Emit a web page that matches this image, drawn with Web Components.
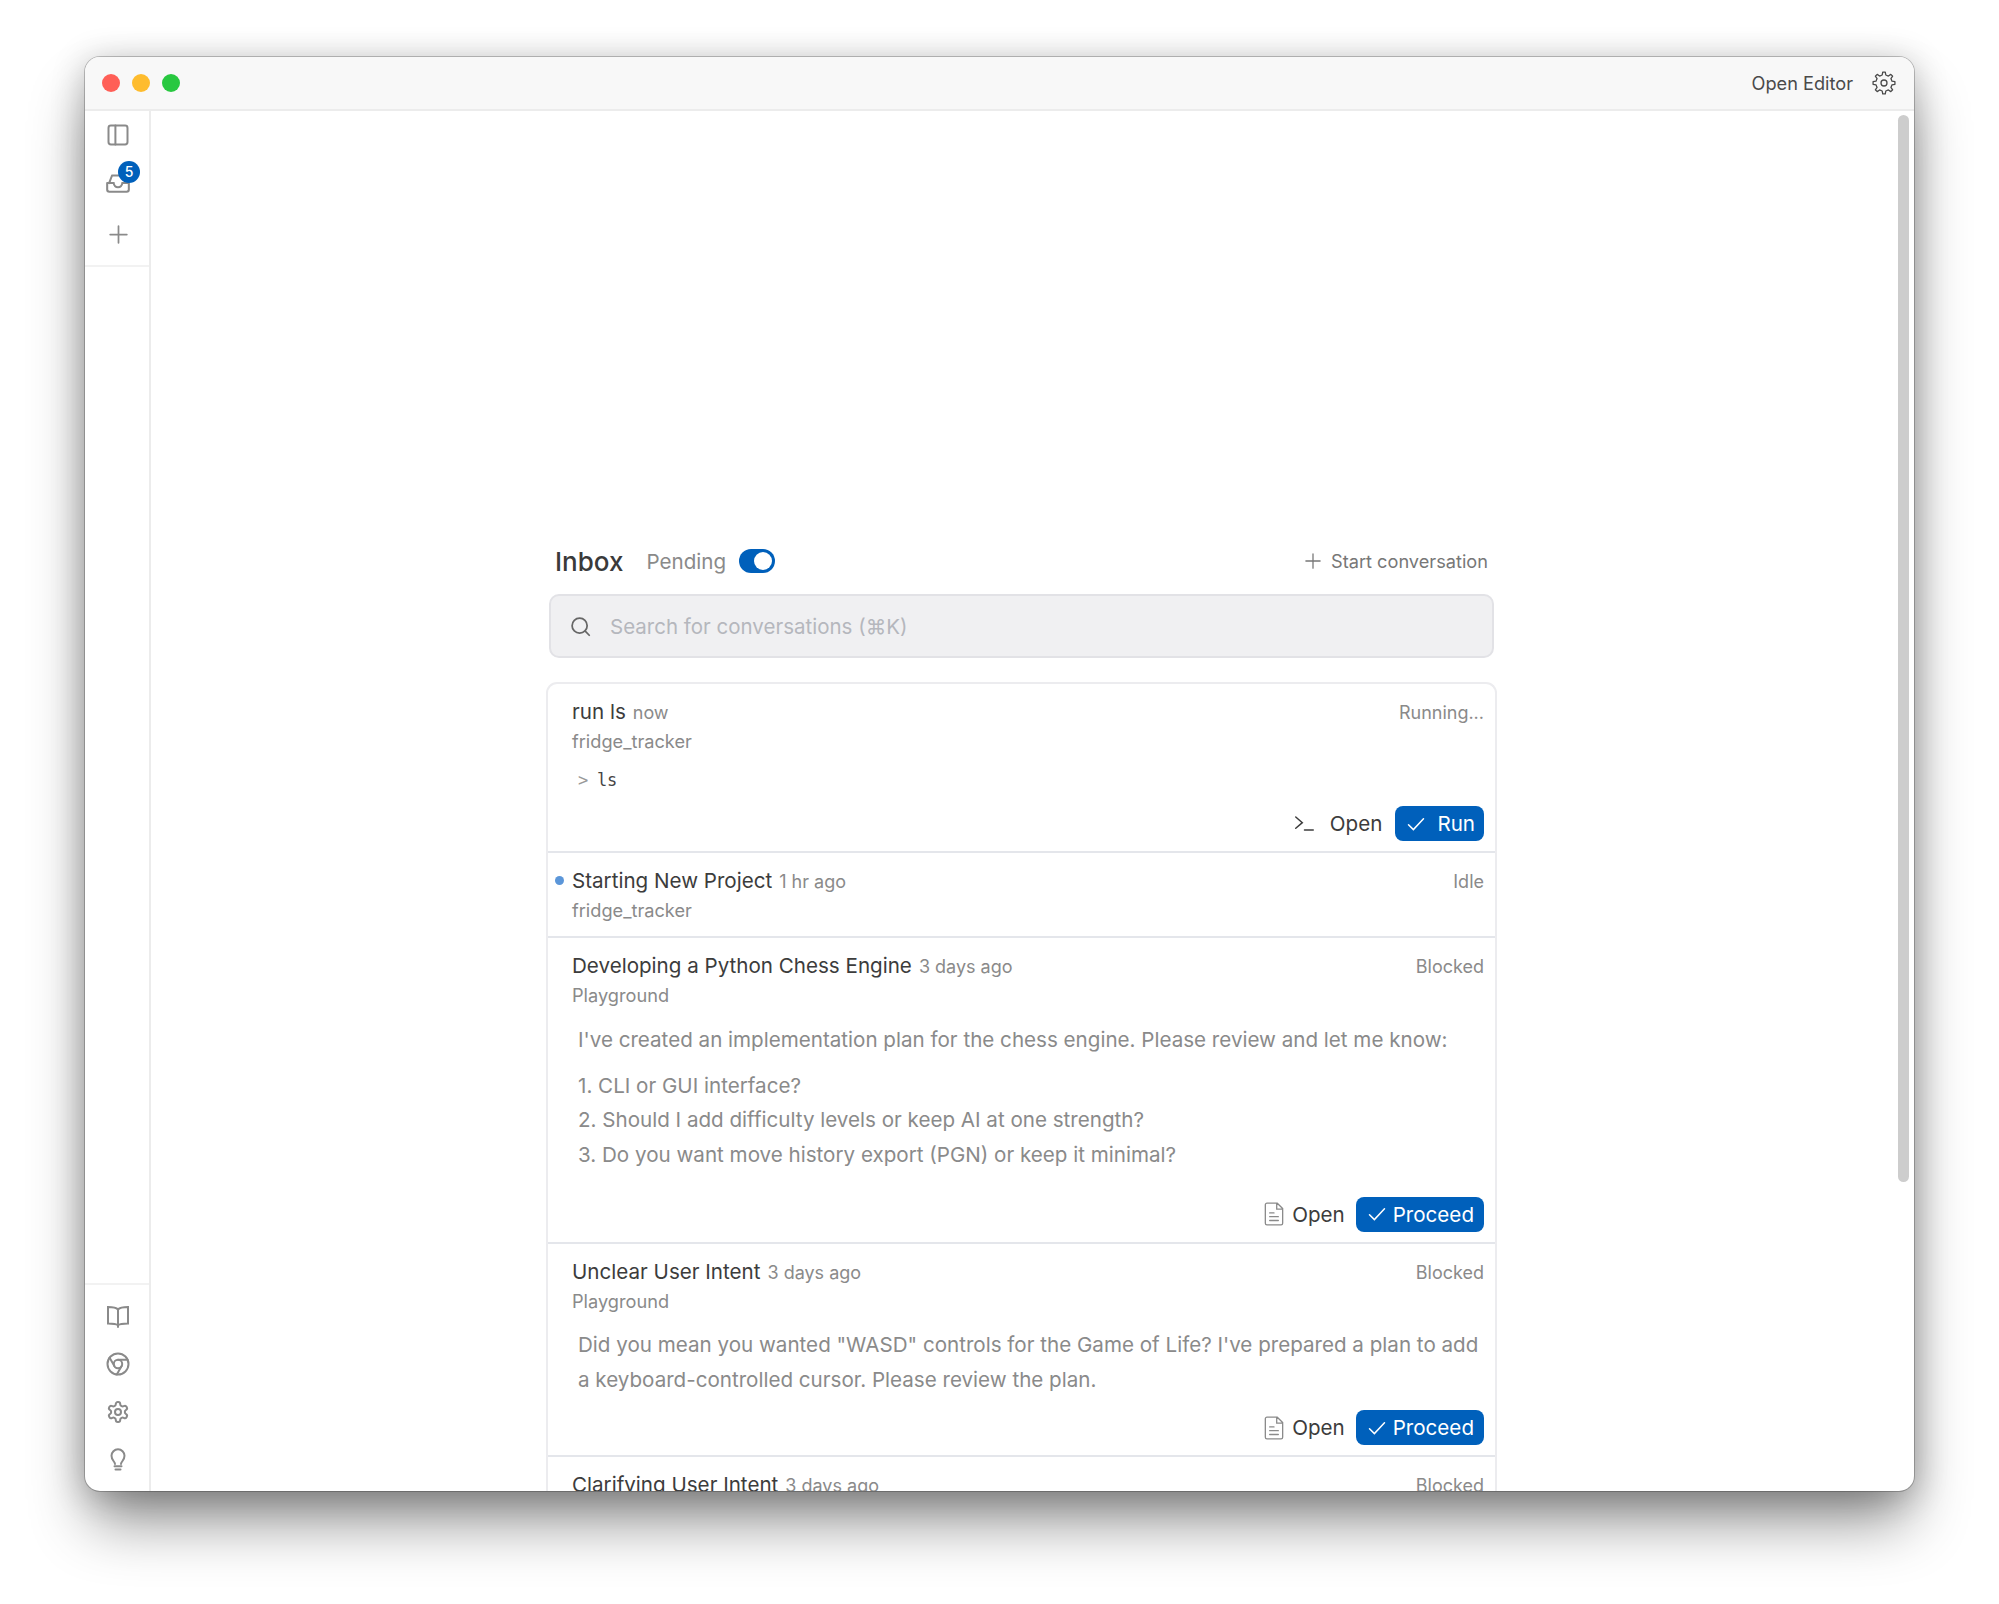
<!DOCTYPE html>
<html lang="en">
<head>
<meta charset="utf-8">
<title>Inbox</title>
<style>
  html, body { margin: 0; background: #fff; }
  body {
    box-sizing: border-box;
    height: 1604px;
    padding: 57px 85px 113px;
    display: flex;
    font-family: Inter, "Liberation Sans", sans-serif;
  }
</style>
</head>
<body>
<app-window>
  <title-bar slot="top"></title-bar>
  <side-bar slot="side"></side-bar>
  <inbox-header></inbox-header>
  <search-box placeholder="Search for conversations (⌘K)"></search-box>
  <conv-list>
    <conv-row heading="run ls" time="now" sub="fridge_tracker" status="Running...">
      <code-line>ls</code-line>
      <row-actions slot="actions" class="near">
        <act-button icon="terminal" label="Open"></act-button>
        <act-button primary icon="check" label="Run" wide></act-button>
      </row-actions>
    </conv-row>
    <conv-row heading="Starting New Project" time="1 hr ago" sub="fridge_tracker" status="Idle" unread></conv-row>
    <conv-row heading="Developing a Python Chess Engine" time="3 days ago" sub="Playground" status="Blocked">
      <row-text>I've created an implementation plan for the chess engine. Please review and let me know:</row-text>
      <row-text list>
        <div>1. CLI or GUI interface?</div>
        <div>2. Should I add difficulty levels or keep AI at one strength?</div>
        <div>3. Do you want move history export (PGN) or keep it minimal?</div>
      </row-text>
      <row-actions slot="actions" class="far">
        <act-button icon="doc" label="Open"></act-button>
        <act-button primary icon="check" label="Proceed"></act-button>
      </row-actions>
    </conv-row>
    <conv-row heading="Unclear User Intent" time="3 days ago" sub="Playground" status="Blocked">
      <row-text>Did you mean you wanted "WASD" controls for the Game of Life? I've prepared a plan to add a keyboard-controlled cursor. Please review the plan.</row-text>
      <row-actions slot="actions">
        <act-button icon="doc" label="Open"></act-button>
        <act-button primary icon="check" label="Proceed"></act-button>
      </row-actions>
    </conv-row>
    <conv-row heading="Clarifying User Intent" time="3 days ago" sub="Playground" status="Blocked"></conv-row>
  </conv-list>
</app-window>

<script>
// gear outline with n teeth, in a 24 box
function gearPath(n, ro, ri) {
  let d = '';
  const step = Math.PI * 2 / n;
  for (let i = 0; i < n; i++) {
    const a = i * step - Math.PI / 2;
    const pts = [
      [ri, a - step * 0.28], [ro, a - step * 0.15], [ro, a + step * 0.15], [ri, a + step * 0.28]
    ];
    pts.forEach((p, j) => {
      const x = (12 + p[0] * Math.cos(p[1])).toFixed(2);
      const y = (12 + p[0] * Math.sin(p[1])).toFixed(2);
      d += (i === 0 && j === 0 ? 'M' : 'L') + x + ' ' + y;
    });
  }
  return d + 'Z';
}

const ICONS = {
  panel: '<rect x="2.500" y="2.500" width="19" height="19" rx="2.400"/><path d="M9.400 2.500v19"/>',
  inbox: '<path d="M6.500 6 H14 M3.800 13 L6.500 6 M2 13 v6 a2 2 0 0 0 2 2 h16 a2 2 0 0 0 2 -2 v-6 M2 13 H8 c.5 2.800 2 3.800 4 3.800 s3.500 -1 4 -3.800 h6"/>',
  plus: '<path d="M12 2.500v19M2.500 12h19"/>',
  book: '<path d="M12 5.500 C10.500 3.800 8 3 2 3 v16.500 c6 0 8.500 .5 10 1.800 c1.500 -1.300 4 -1.800 10 -1.800 V3 c-6 0 -8.500 .8 -10 2.500z M12 5.500 V23"/>',
  chrome: '<circle cx="12" cy="12" r="10.500"/><circle cx="12" cy="12" r="4.200"/><path d="M12 7.800h9.600M8.400 14.100 3.600 5.800M15.600 14.100 10.800 22.400"/>',
  cog: '<path d="M12.220 2h-.44a2 2 0 0 0-2 2v.18a2 2 0 0 1-1 1.730l-.43.25a2 2 0 0 1-2 0l-.15-.08a2 2 0 0 0-2.730.73l-.22.38a2 2 0 0 0 .73 2.730l.15.1a2 2 0 0 1 1 1.720v.51a2 2 0 0 1-1 1.740l-.15.09a2 2 0 0 0-.73 2.730l.22.38a2 2 0 0 0 2.730.73l.15-.08a2 2 0 0 1 2 0l.43.25a2 2 0 0 1 1 1.730V20a2 2 0 0 0 2 2h.44a2 2 0 0 0 2-2v-.18a2 2 0 0 1 1-1.730l.43-.25a2 2 0 0 1 2 0l.15.08a2 2 0 0 0 2.730-.73l.22-.39a2 2 0 0 0-.73-2.730l-.15-.08a2 2 0 0 1-1-1.740v-.5a2 2 0 0 1 1-1.740l.15-.09a2 2 0 0 0 .73-2.730l-.22-.38a2 2 0 0 0-2.730-.73l-.15.08a2 2 0 0 1-2 0l-.43-.25a2 2 0 0 1-1-1.730V4a2 2 0 0 0-2-2z"/><circle cx="12" cy="12" r="3"/>',
  gear8: '<path stroke-linejoin="round" d="' + gearPath(8, 11, 8.200) + '"/><circle cx="12" cy="12" r="3"/>',
  bulb: '<path d="M9 16 C9 13.500 5.500 12.500 5.500 7.800 a6.500 6.500 0 0 1 13 0 C18.500 12.500 15 13.500 15 16 M8.500 18.300h7M9.500 21.500h5"/>',
  search: '<circle cx="11" cy="11" r="8.600"/><path d="m17.400 17.400 4.600 4.600"/>',
  terminal: '<path d="M2 4.500 9.500 11 2 17.500M12 19.500h10"/>',
  doc: '<path d="M5.500 2h9.500l5 5v13.500a1.500 1.500 0 0 1-1.500 1.500h-13A1.500 1.500 0 0 1 4 20.500v-17A1.500 1.500 0 0 1 5.500 2zM14.500 2v5.500H20M8 11h4M8 14.500h8M8 18h8"/>',
  check: '<path d="M2 13 8.500 19.500 22 5"/>'
};

class UiIcon extends HTMLElement {
  connectedCallback() {
    const size = this.getAttribute('size') || 24;
    const width = this.getAttribute('stroke') || 1.600;
    this.attachShadow({mode: 'open'}).innerHTML = `
      <style>
        :host { display: inline-flex; flex: none; line-height: 0; }
        svg { fill: none; stroke: currentColor; stroke-linecap: round; }
      </style>
      <svg width="${size}" height="${size}" viewBox="0 0 24 24" stroke-width="${width}">${ICONS[this.getAttribute('name')]}</svg>`;
  }
}
customElements.define('ui-icon', UiIcon);

class AppWindow extends HTMLElement {
  constructor() {
    super();
    this.attachShadow({mode: 'open'}).innerHTML = `
      <style>
        :host {
          display: flex; flex-direction: column; flex: 1; min-width: 0;
          position: relative; overflow: hidden;
          background: #fff; border-radius: 15px;
          box-shadow: 0 0 0 1px rgba(0,0,0,.22), 0 36px 60px -6px rgba(0,0,0,.44), 0 4px 34px rgba(0,0,0,.24);
        }
        .body { flex: 1; display: flex; min-height: 0; }
        main {
          flex: 1; min-width: 0; overflow: hidden;
          display: flex; flex-direction: column; align-items: center;
          padding: 430px 22px 0 0;
        }
        .col { width: 951px; }
        .thumb {
          position: absolute; left: 1813px; top: 58px;
          width: 11px; height: 1067px; border-radius: 6px; background: #cdcdcd;
        }
      </style>
      <slot name="top"></slot>
      <div class="body">
        <slot name="side"></slot>
        <main><div class="col"><slot></slot></div></main>
      </div>
      <div class="thumb"></div>`;
  }
}
customElements.define('app-window', AppWindow);

class TitleBar extends HTMLElement {
  constructor() {
    super();
    this.attachShadow({mode: 'open'}).innerHTML = `
      <style>
        :host {
          display: flex; align-items: center; flex: none; box-sizing: border-box;
          height: 54px; padding: 0 18px 0 17px;
          background: #f8f8f8; border-bottom: 2px solid #ececec;
        }
        .lights { display: flex; gap: 12px; }
        .lights i { width: 18px; height: 18px; border-radius: 50%; }
        .label { margin-left: auto; font-size: 18.200px; color: #4a4a4a; }
        ui-icon { margin-left: 19px; color: #4a4a4a; }
      </style>
      <div class="lights">
        <i style="background:#ff5f57"></i><i style="background:#febc2e"></i><i style="background:#28c840"></i>
      </div>
      <span class="label">Open Editor</span>
      <ui-icon name="gear8" size="24" stroke="1.300"></ui-icon>`;
  }
}
customElements.define('title-bar', TitleBar);

class SideBar extends HTMLElement {
  constructor() {
    super();
    this.attachShadow({mode: 'open'}).innerHTML = `
      <style>
        :host {
          display: flex; flex-direction: column; justify-content: space-between;
          box-sizing: border-box; width: 66px; height: 100%; padding-left: 2px;
          border-right: 2px solid #ececec; color: #8a8a8a;
        }
        .group { display: flex; flex-direction: column; align-items: center; margin-left: -2px; }
        .top { padding-bottom: 7px; border-bottom: 2px solid #f2f2f2; }
        .bottom { padding: 7px 0 7px; border-top: 2px solid #f2f2f2; }
        .item { position: relative; box-sizing: border-box; height: 48px; width: 100%; padding-left: 2px; display: flex; align-items: center; justify-content: center; }
        .add { margin-top: 3px; }
        .tray { margin-top: -3px; }
        .badge {
          position: absolute; left: 33px; top: 2px;
          width: 22px; height: 22px; border-radius: 50%;
          background: #0060bb; color: #fff;
          font: 500 14px/22px Inter, sans-serif; text-align: center;
        }
      </style>
      <div class="group top">
        <div class="item"><ui-icon name="panel" size="24" stroke="2"></ui-icon></div>
        <div class="item"><ui-icon class="tray" name="inbox" size="26" stroke="1.900"></ui-icon><span class="badge">5</span></div>
        <div class="item add"><ui-icon name="plus" size="21" stroke="2"></ui-icon></div>
      </div>
      <div class="group bottom">
        <div class="item"><ui-icon name="book" size="24" stroke="2"></ui-icon></div>
        <div class="item"><ui-icon name="chrome" size="24" stroke="2"></ui-icon></div>
        <div class="item"><ui-icon name="cog" size="24" stroke="2"></ui-icon></div>
        <div class="item"><ui-icon name="bulb" size="24" stroke="2"></ui-icon></div>
      </div>`;
  }
}
customElements.define('side-bar', SideBar);

class InboxHeader extends HTMLElement {
  constructor() {
    super();
    this.attachShadow({mode: 'open'}).innerHTML = `
      <style>
        :host {
          display: flex; align-items: center; height: 40px;
          padding: 0 9px 0 9px; margin-bottom: 13px;
        }
        h1 { margin: 0; font-size: 26px; font-weight: 500; color: #3a3a3a; }
        .pending { margin-left: 23px; font-size: 20.600px; color: #8a8a8a; }
        .toggle {
          position: relative; margin-left: 13px;
          width: 36px; height: 24px; border-radius: 12px; background: #0060bb;
        }
        .toggle::after {
          content: ""; position: absolute; right: 3px; top: 3px;
          width: 18px; height: 18px; border-radius: 50%; background: #fff;
        }
        .start {
          margin-left: auto; display: flex; align-items: center; gap: 9px;
          font-size: 18.200px; color: #777;
        }
      </style>
      <h1>Inbox</h1>
      <span class="pending">Pending</span>
      <span class="toggle"></span>
      <span class="start"><ui-icon name="plus" size="18" stroke="1.700"></ui-icon>Start conversation</span>`;
  }
}
customElements.define('inbox-header', InboxHeader);

class SearchBox extends HTMLElement {
  connectedCallback() {
    this.attachShadow({mode: 'open'}).innerHTML = `
      <style>
        :host {
          display: flex; align-items: center; gap: 19px; box-sizing: border-box;
          height: 64px; margin: 0 3px 24px 3px; padding: 0 20px 0 19px;
          background: #f0f0f2; border: 2px solid #e2e2e6; border-radius: 10px;
        }
        ui-icon { color: #666; }
        span { font-size: 20.500px; color: #b5b7bd; }
      </style>
      <ui-icon name="search" size="21" stroke="2"></ui-icon>
      <span>${this.getAttribute('placeholder')}</span>`;
  }
}
customElements.define('search-box', SearchBox);

class ConvList extends HTMLElement {
  constructor() {
    super();
    this.attachShadow({mode: 'open'}).innerHTML = `
      <style>
        :host {
          display: block; border: 2px solid #ececef; border-bottom: 0;
          border-radius: 11px 11px 0 0;
        }
      </style>
      <slot></slot>`;
  }
}
customElements.define('conv-list', ConvList);

class ConvRow extends HTMLElement {
  connectedCallback() {
    const dot = this.hasAttribute('unread') ? '<i class="dot"></i>' : '';
    this.attachShadow({mode: 'open'}).innerHTML = `
      <style>
        :host {
          display: block; position: relative;
          padding: 13px 11px 9px 24px;
          border-bottom: 2px solid #e4e6eb;
        }
        :host(:last-child) { border-bottom: 0; }
        .top { display: flex; align-items: baseline; height: 30px; line-height: 30px; }
        .name { font-size: 20.600px; color: #3c3c3c; }
        .time { margin-left: 7px; font-size: 18px; color: #8a8a8a; }
        .status { margin-left: auto; font-size: 18px; color: #8a8a8a; }
        .sub { margin-top: -1px; padding-bottom: 2px; font-size: 18.200px; line-height: 30px; color: #8a8a8a; }
        .dot {
          position: absolute; left: 7px; top: 23px;
          width: 9px; height: 9px; border-radius: 50%; background: #5b96d9;
        }
      </style>
      ${dot}
      <div class="top">
        <span class="name">${this.getAttribute('heading')}</span>
        <span class="time">${this.getAttribute('time')}</span>
        <span class="status">${this.getAttribute('status')}</span>
      </div>
      <div class="sub">${this.getAttribute('sub')}</div>
      <slot></slot>
      <slot name="actions"></slot>`;
  }
}
customElements.define('conv-row', ConvRow);

class RowText extends HTMLElement {
  constructor() {
    super();
    this.attachShadow({mode: 'open'}).innerHTML = `
      <style>
        :host {
          display: block; margin: 10.500px 0 0 6px;
          font-size: 20.600px; line-height: 34.400px; color: #8a8a8a;
        }
        :host([list]) { margin-top: 12px; }
      </style>
      <slot></slot>`;
  }
}
customElements.define('row-text', RowText);

class CodeLine extends HTMLElement {
  constructor() {
    super();
    this.attachShadow({mode: 'open'}).innerHTML = `
      <style>
        :host {
          display: block; margin: 7px 0 0 6px;
          font: 17px/30px "DejaVu Sans Mono", monospace; color: #444;
        }
        b { font-weight: 400; color: #999; letter-spacing: -.8px; }
      </style>
      <b>&gt; </b><slot></slot>`;
  }
}
customElements.define('code-line', CodeLine);

class RowActions extends HTMLElement {
  constructor() {
    super();
    this.attachShadow({mode: 'open'}).innerHTML = `
      <style>
        :host {
          display: flex; justify-content: flex-end; align-items: center; gap: 13px;
          margin: 13.500px 0 1px;
        }
        :host(.far) { margin-top: 24.500px; }
        :host(.near) { margin-top: 11px; }
      </style>
      <slot></slot>`;
  }
}
customElements.define('row-actions', RowActions);

class ActButton extends HTMLElement {
  connectedCallback() {
    const name = this.getAttribute('icon');
    const iconSize = name === 'check' ? 18 : name === 'doc' ? 26 : 21;
    const iconStroke = name === 'doc' ? 1.200 : name === 'check' ? 2 : 1.700;
    this.attachShadow({mode: 'open'}).innerHTML = `
      <style>
        :host {
          display: inline-flex; align-items: center; box-sizing: border-box;
          height: 35px; font-size: 20.600px; color: #3c3c3c; gap: 5px;
        }
        :host([icon=terminal]) { gap: 15px; }
        :host([icon=doc]) { margin-right: -2px; }
        :host([primary]) {
          padding: 0 10px 0 12px; gap: 7px; border-radius: 8px;
          background: #0060bb; color: #fff;
        }
        :host([wide]) { gap: 12px; padding: 0 9px 0 12px; }
        :host([icon=doc]) ui-icon { color: #8a8a8a; }
      </style>
      <ui-icon name="${name}" size="${iconSize}" stroke="${iconStroke}"></ui-icon>
      <span>${this.getAttribute('label')}</span>`;
  }
}
customElements.define('act-button', ActButton);
</script>
</body>
</html>
